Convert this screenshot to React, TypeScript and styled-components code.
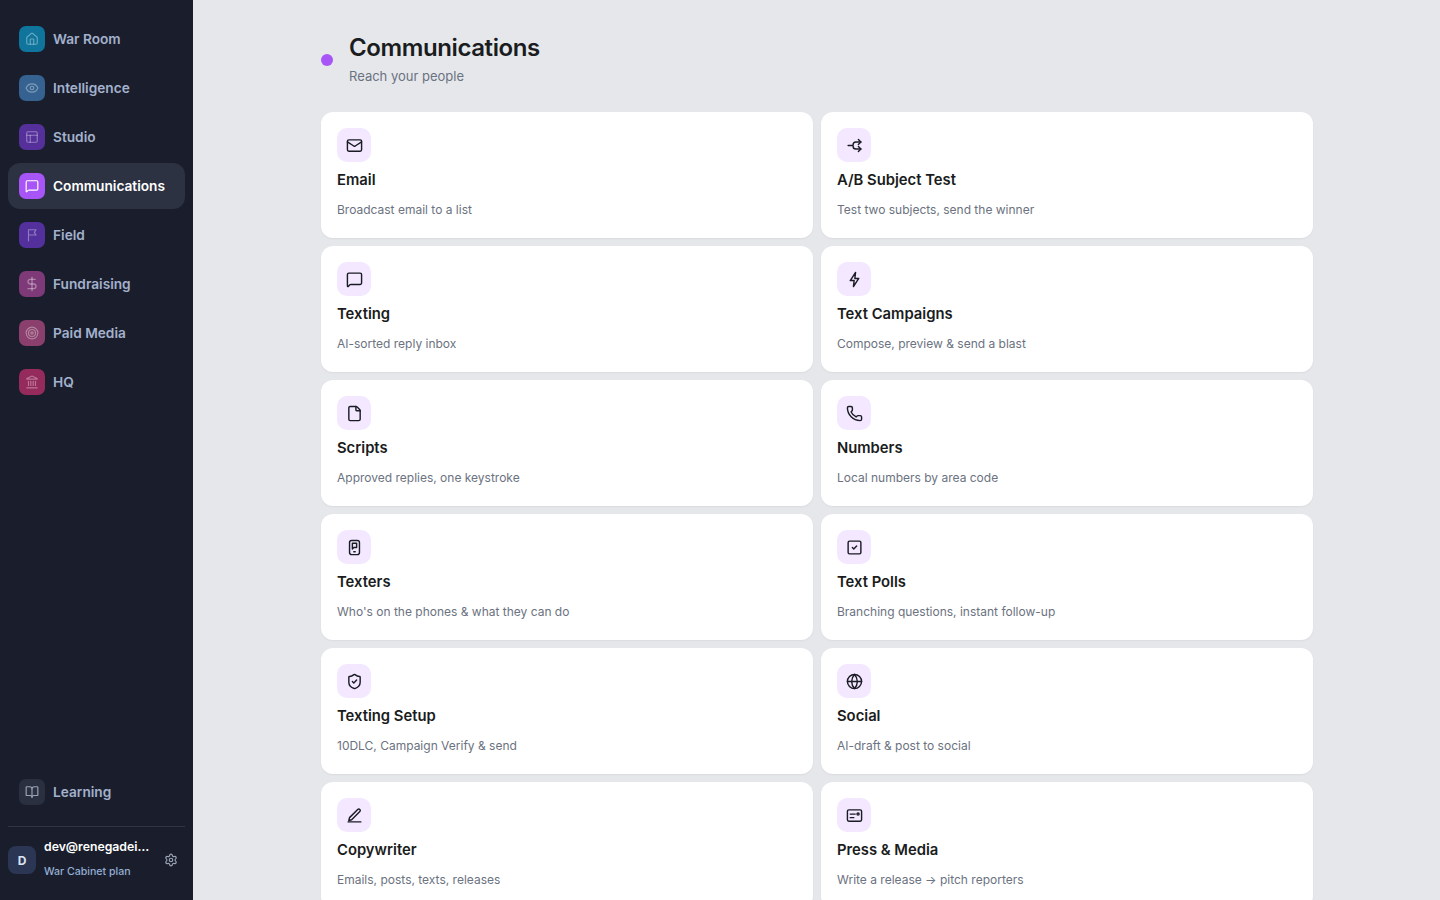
import type { ReactNode } from "react";
import styled, { createGlobalStyle } from "styled-components";
import {
  BookOpen,
  DollarSign,
  Eye,
  File,
  Globe,
  House,
  Landmark,
  Mail,
  MessageSquare,
  PanelsTopLeft,
  Phone,
  Settings,
  ShieldCheck,
  SquareCheck,
  Target,
} from "lucide-react";

const GlobalStyle = createGlobalStyle`
  * {
    box-sizing: border-box;
  }
  html, body {
    margin: 0;
    height: 100%;
    overflow: hidden;
  }
  body {
    font-family: Inter, "Liberation Sans", sans-serif;
  }
`;

const Shell = styled.div`
  display: flex;
  height: 100vh;
  background: #e5e7eb;
`;

const Sidebar = styled.aside`
  width: 193px;
  flex-shrink: 0;
  display: flex;
  flex-direction: column;
  background: #1a1e2c;
  padding: 16px 8px 7px;
`;

const NavList = styled.nav`
  display: flex;
  flex-direction: column;
  gap: 3px;
  flex: 1;
`;

const NavItem = styled.a<{ $active?: boolean }>`
  display: flex;
  align-items: center;
  gap: 8px;
  height: 46px;
  padding: 0 11px;
  border-radius: 12px;
  font-size: 13.7px;
  font-weight: 600;
  color: ${(p) => (p.$active ? "#ffffff" : "#a3b1cc")};
  background: ${(p) => (p.$active ? "#2c3242" : "transparent")};
`;

const NavIcon = styled.span<{ $bg: string; $active?: boolean }>`
  width: 26px;
  height: 26px;
  border-radius: 7px;
  display: flex;
  align-items: center;
  justify-content: center;
  background: ${(p) => p.$bg};
  color: ${(p) => (p.$active ? "#ffffff" : "rgba(255, 255, 255, 0.36)")};
`;

const SidebarFoot = styled.div`
  display: flex;
  flex-direction: column;
`;

const UserRow = styled.div`
  margin-top: 11px;
  border-top: 1px solid #2e3442;
  height: 67px;
  display: flex;
  align-items: center;
  gap: 8px;
`;

const Avatar = styled.span`
  width: 28px;
  height: 28px;
  flex-shrink: 0;
  border-radius: 8px;
  background: #2b3654;
  color: #dbe4f3;
  font-size: 12px;
  font-weight: 700;
  display: flex;
  align-items: center;
  justify-content: center;
`;

const UserText = styled.div`
  width: 106px;
  margin-bottom: 2px;
  display: flex;
  flex-direction: column;
  gap: 10px;
`;

const UserEmail = styled.div`
  font-size: 12.25px;
  font-weight: 600;
  line-height: 16px;
  color: #ffffff;
  white-space: nowrap;
`;

const UserPlan = styled.div`
  font-size: 10.6px;
  font-weight: 500;
  line-height: 14px;
  color: #94aed4;
`;

const GearButton = styled.span`
  display: flex;
  margin: 0 0 1px 6px;
  color: #9aa3b2;
`;

const Main = styled.main`
  flex: 1;
  height: 100vh;
  overflow: hidden;
`;

const Content = styled.div`
  width: 1024px;
  margin-left: 112px;
  padding: 32px 16px;
`;

const Header = styled.header`
  display: flex;
  align-items: center;
  gap: 16px;
  margin-bottom: 26px;
`;

const Dot = styled.span`
  width: 12px;
  height: 12px;
  margin-top: 2px;
  border-radius: 50%;
  background: #a855f7;
`;

const Title = styled.h1`
  margin: 0;
  font-size: 24px;
  line-height: 32px;
  font-weight: 600;
  letter-spacing: -0.4px;
  color: #1a1c20;
`;

const Subtitle = styled.p`
  margin: 2px 0 0;
  font-size: 13px;
  line-height: 20px;
  color: #6b7280;
`;

const Grid = styled.div`
  display: grid;
  grid-template-columns: 1fr 1fr;
  gap: 8px;
`;

const Card = styled.a`
  height: 126px;
  padding: 16px;
  border-radius: 12px;
  background: #ffffff;
  box-shadow: 0 1px 2px rgba(0, 0, 0, 0.05);
`;

const CardIcon = styled.span`
  width: 34px;
  height: 34px;
  padding: 1px 0 0 1px;
  border-radius: 10px;
  background: #f3e8ff;
  color: #1a1b24;
  display: flex;
  align-items: center;
  justify-content: center;
`;

const CardTitle = styled.div`
  margin-top: 7px;
  font-size: 14.8px;
  line-height: 22px;
  font-weight: 600;
  color: #1a1c20;
`;

const CardText = styled.div`
  margin-top: 11px;
  font-size: 12px;
  line-height: 16px;
  color: #6b7280;
`;

const Glyph = ({ size = 17, children }: { size?: number; children: ReactNode }) => (
  <svg
    width={size}
    height={size}
    viewBox="0 0 24 24"
    fill="none"
    stroke="currentColor"
    strokeWidth="2"
    strokeLinecap="round"
    strokeLinejoin="round"
  >
    {children}
  </svg>
);

// lucide has nothing close for these, so they are drawn here
const FieldFlag = () => (
  <Glyph size={14}>
    <path d="M6 22V3h13l-3 4.5 3 4.5H6" />
  </Glyph>
);

const SplitArrows = () => (
  <Glyph>
    <path d="M3 12h6" />
    <path d="M21 7h-7a4 4 0 0 0-4 4v2a4 4 0 0 0 4 4h7" />
    <path d="m17.5 3.5 3.5 3.5-3.5 3.5" />
    <path d="m17.5 13.5 3.5 3.5-3.5 3.5" />
  </Glyph>
);

const SlimBolt = () => (
  <Glyph>
    <path d="M13.5 2 6 13.5h5.5L10.5 22 18 10.5h-5.5z" />
  </Glyph>
);

const PhoneBubble = () => (
  <Glyph>
    <rect x="5" y="2" width="14" height="20" rx="3" />
    <path d="M9 6h6v6h-4l-2 2z" />
    <path d="M11 18h2" />
  </Glyph>
);

const PenUnderline = () => (
  <Glyph>
    <path d="M3 21h18" />
    <path d="M16.5 3.5a2.12 2.12 0 0 1 3 3L8 18l-4 1 1-4z" />
  </Glyph>
);

const PressCard = () => (
  <Glyph>
    <rect x="2" y="4" width="20" height="16" rx="2" />
    <path d="M6 10h7" />
    <path d="M6 15h5" />
    <circle cx="17" cy="10" r="1.5" />
  </Glyph>
);

const nav = [
  { label: "War Room", bg: "#0f759c", icon: <House size={14} /> },
  { label: "Intelligence", bg: "#356290", icon: <Eye size={14} /> },
  { label: "Studio", bg: "#55309a", icon: <PanelsTopLeft size={14} /> },
  { label: "Communications", bg: "#a855f7", icon: <MessageSquare size={14} />, active: true },
  { label: "Field", bg: "#53309c", icon: <FieldFlag /> },
  { label: "Fundraising", bg: "#7e3a78", icon: <DollarSign size={16} /> },
  { label: "Paid Media", bg: "#8a3f6c", icon: <Target size={14} /> },
  { label: "HQ", bg: "#952a5c", icon: <Landmark size={14} /> },
];

const cards: { title: string; text: string; icon: ReactNode }[] = [
  { title: "Email", text: "Broadcast email to a list", icon: <Mail size={17} /> },
  { title: "A/B Subject Test", text: "Test two subjects, send the winner", icon: <SplitArrows /> },
  { title: "Texting", text: "AI-sorted reply inbox", icon: <MessageSquare size={17} /> },
  { title: "Text Campaigns", text: "Compose, preview & send a blast", icon: <SlimBolt /> },
  { title: "Scripts", text: "Approved replies, one keystroke", icon: <File size={17} /> },
  { title: "Numbers", text: "Local numbers by area code", icon: <Phone size={17} /> },
  { title: "Texters", text: "Who's on the phones & what they can do", icon: <PhoneBubble /> },
  { title: "Text Polls", text: "Branching questions, instant follow-up", icon: <SquareCheck size={17} /> },
  { title: "Texting Setup", text: "10DLC, Campaign Verify & send", icon: <ShieldCheck size={17} /> },
  { title: "Social", text: "AI-draft & post to social", icon: <Globe size={17} /> },
  { title: "Copywriter", text: "Emails, posts, texts, releases", icon: <PenUnderline /> },
  { title: "Press & Media", text: "Write a release → pitch reporters", icon: <PressCard /> },
];

export default function App() {
  return (
    <Shell>
      <GlobalStyle />
      <Sidebar>
        <NavList>
          {nav.map((item) => (
            <NavItem key={item.label} $active={item.active}>
              <NavIcon $bg={item.bg} $active={item.active}>
                {item.icon}
              </NavIcon>
              {item.label}
            </NavItem>
          ))}
        </NavList>
        <SidebarFoot>
          <NavItem>
            <NavIcon $bg="#2a3040">
              <BookOpen size={14} color="#9aa3b2" />
            </NavIcon>
            Learning
          </NavItem>
          <UserRow>
            <Avatar>D</Avatar>
            <UserText>
              <UserEmail>dev@renegadei…</UserEmail>
              <UserPlan>War Cabinet plan</UserPlan>
            </UserText>
            <GearButton>
              <Settings size={14} />
            </GearButton>
          </UserRow>
        </SidebarFoot>
      </Sidebar>
      <Main>
        <Content>
          <Header>
            <Dot />
            <div>
              <Title>Communications</Title>
              <Subtitle>Reach your people</Subtitle>
            </div>
          </Header>
          <Grid>
            {cards.map((card) => (
              <Card key={card.title}>
                <CardIcon>{card.icon}</CardIcon>
                <CardTitle>{card.title}</CardTitle>
                <CardText>{card.text}</CardText>
              </Card>
            ))}
          </Grid>
        </Content>
      </Main>
    </Shell>
  );
}
